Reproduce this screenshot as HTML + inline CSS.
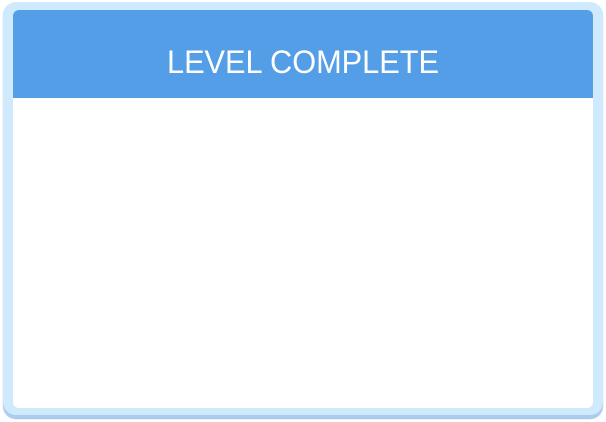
<!DOCTYPE html>
<html><head><meta charset="utf-8"><style>
html,body{margin:0;padding:0;width:606px;height:422px;background:#fff;overflow:hidden}
.outer{position:absolute;left:3px;top:2px;width:600px;height:416px;box-sizing:border-box;border-radius:13px;background:#cfeafd;box-shadow:inset 0 -3px 0 #a9cdf2, 0 1px 1px #9fb9dc;}
.inner{position:absolute;left:10px;top:8px;width:580px;height:398px;background:#fff;border-radius:6px;overflow:hidden}
.head{position:absolute;left:0;top:0;width:580px;height:88px;background:#539ee6;}
.t{position:absolute;left:0;top:34px;width:580px;text-align:center;color:#fff;font-family:"Comic Sans MS","Liberation Sans",sans-serif;font-size:32px;line-height:36px;transform:scaleX(0.96);}
</style></head><body>
<div class="outer"><div class="inner"><div class="head"><div class="t">LEVEL COMPLETE</div></div></div></div>
</body></html>
